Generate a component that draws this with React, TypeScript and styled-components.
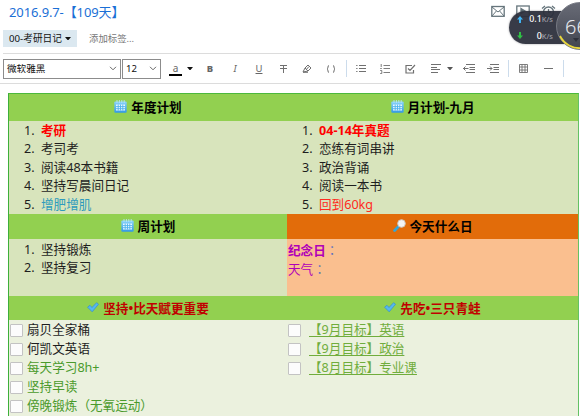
import React from "react";
import styled, { createGlobalStyle } from "styled-components";

const Global = createGlobalStyle`
  * { box-sizing: border-box; }
  html, body { margin: 0; padding: 0; background: #fff; overflow: hidden; }
  body { font-family: "Noto Sans", "Noto Sans CJK SC", sans-serif; font-size: 12.6px; color: #1e1e1e; }
`;

const Page = styled.div`
  position: relative;
  width: 580px;
  height: 416px;
  overflow: hidden;
  background: #fff;
`;

const TitleBar = styled.header`
  height: 27px;
  padding: 0 0 0 9px;
  display: flex;
  justify-content: space-between;
`;

const Title = styled.h1`
  margin: 0;
  font-size: 13px;
  line-height: 25px;
  font-weight: 400;
  color: #1a6fd6;
  white-space: nowrap;
  letter-spacing: -0.12px;
`;

const TitleIcons = styled.div`
  display: flex;
  gap: 11px;
  margin-top: 5px;
  margin-right: -1px;
  svg { display: block; }
`;

const TagRow = styled.div`
  height: 27px;
  margin: 0 0 0 3px;
  padding-top: 3px;
  display: flex;
  align-items: flex-start;
  border-bottom: 1px solid #dcdcdc;
`;

const Notebook = styled.div`
  width: 74px;
  height: 17px;
  padding-left: 6px;
  display: flex;
  align-items: center;
  gap: 3px;
  background: #dbe8f0;
  font-size: 9.7px;
  line-height: 17px;
  color: #111;
  white-space: nowrap;
`;

const TagHint = styled.span`
  margin-left: 12px;
  font-size: 9.4px;
  line-height: 17px;
  color: #777;
  white-space: nowrap;
`;

const Toolbar = styled.div`
  height: 30px;
  padding: 0 0 0 3px;
  display: flex;
  align-items: center;
  border-bottom: 1px solid #dcdcdc;
`;

const Select = styled.div<{ $w: number }>`
  width: ${(p) => p.$w}px;
  height: 20px;
  margin-right: 1px;
  padding: 0 3px;
  display: flex;
  align-items: center;
  justify-content: space-between;
  border: 1px solid #8c8c8c;
  font-size: 9.6px;
  line-height: 16px;
  color: #111;
`;

const Tool = styled.span<{ $w: number; $ml: number }>`
  width: ${(p) => p.$w}px;
  margin-left: ${(p) => p.$ml}px;
  flex: none;
  display: flex;
  justify-content: center;
  svg { display: block; }
`;

const Glyph = styled.span<{ $bold?: boolean; $italic?: boolean; $under?: boolean }>`
  font-family: "Noto Sans", sans-serif;
  font-size: 9.5px;
  line-height: 12px;
  color: #666;
  font-weight: ${(p) => (p.$bold ? 800 : 400)};
  font-style: ${(p) => (p.$italic ? "italic" : "normal")};
  text-decoration: ${(p) => (p.$under ? "underline" : "none")};
`;

const ColorSwatch = styled.span`
  width: 13px;
  height: 13px;
  margin-left: 7px;
  margin-top: 1px;
  display: flex;
  align-items: center;
  justify-content: center;
  border-bottom: 2px solid #000;
  font-size: 10px;
  line-height: 10px;
  color: #666;
`;

const Divider = styled.span<{ $ml: number }>`
  width: 1px;
  height: 17px;
  margin-left: ${(p) => p.$ml}px;
  background: #ccdcec;
`;

const Sheet = styled.main`
  width: 571px;
  height: 340px;
  margin: 9px 0 0 8px;
  display: grid;
  grid-template-columns: 278px 1fr;
  grid-template-rows: 27px 93px 25px 57px 24px 1fr;
  border: 1px solid #3db03a;
  border-top-color: #4cb83c;
  border-right-color: #63c264;
`;

const HeadCell = styled.div<{ $tone?: "orange"; $red?: boolean }>`
  display: flex;
  align-items: center;
  justify-content: center;
  gap: 4px;
  background: ${(p) => (p.$tone === "orange" ? "#e26c0a" : "#92d050")};
  color: ${(p) => (p.$red ? "#c00000" : "#000")};
  font-weight: 700;
  line-height: 19px;
  white-space: nowrap;
  svg { display: block; flex: none; margin-top: ${(p) => (p.$red ? -1 : -3)}px; }
`;

const Cell = styled.div<{ $bg: string; $pad: string }>`
  padding: ${(p) => p.$pad};
  background: ${(p) => p.$bg};
  overflow: hidden;
`;

const Item = styled.div`
  display: grid;
  grid-template-columns: 17px 1fr;
  height: 18.4px;
  line-height: 18.4px;
  white-space: nowrap;
`;

const Text = styled.span<{ $color?: string; $bold?: boolean; $link?: boolean }>`
  color: ${(p) => p.$color ?? "inherit"};
  font-weight: ${(p) => (p.$bold ? 700 : 400)};
  text-decoration: ${(p) => (p.$link ? "underline" : "none")};
  text-underline-offset: 2px;
`;

const Colon = styled.span`
  font-family: "Noto Sans CJK TC", sans-serif;
  color: #5b6fc0;
`;

const CheckRow = styled.div<{ $gap: number }>`
  display: flex;
  align-items: center;
  gap: ${(p) => p.$gap}px;
  height: 18.9px;
  line-height: 18.9px;
  white-space: nowrap;
`;

const Box = styled.span`
  width: 13px;
  height: 13px;
  flex: none;
  margin-top: 1px;
  border: 1px solid #c3c3c3;
  border-radius: 1px;
  background: #fcfcfc;
`;

const MemoLine = styled.div`
  height: 19px;
  line-height: 19px;
  color: #b000b8;
`;

const SpeedWidget = styled.aside`
  position: absolute;
  left: 509px;
  top: 11px;
  width: 90px;
  height: 33px;
  padding: 0 0 0 8px;
  border-radius: 17px;
  background: rgba(44, 47, 60, 0.94);
  box-shadow: 0 0 2px rgba(40, 40, 50, 0.5);
`;

const SpeedRow = styled.div`
  width: 36px;
  height: 16.5px;
  display: grid;
  grid-template-columns: 7px 1fr auto;
  align-items: center;
  font-size: 8.8px;
  font-weight: 500;
  line-height: 16px;
  color: #fff;
  text-align: right;
  white-space: nowrap;
  svg { display: block; }
`;

const Unit = styled.span`
  font-size: 7.5px;
  color: #9a9ca6;
`;

const Dial = styled.div`
  position: absolute;
  left: 556px;
  top: 2px;
  width: 48px;
  height: 48px;
  border-radius: 50%;
  background: linear-gradient(#686b76, #41444f);
  border: 1px solid #777a84;
  color: #e6e8ec;
  font-size: 20px;
  font-weight: 300;
  line-height: 47px;
  padding-left: 8px;
  svg { position: absolute; left: 0; top: 0; }
`;

const Caret = ({ size = 6, color = "#111" }: { size?: number; color?: string }) => (
  <svg width={size} height={size / 2 + 0.5} viewBox="0 0 6 3.5"><path d="M0 0h6L3 3.5z" fill={color} /></svg>
);
const Chevron = () => (
  <svg width="8" height="5" viewBox="0 0 8 5" fill="none" stroke="#666"><path d="M1 .8l3 3 3-3" /></svg>
);
const Calendar = () => (
  <svg width="13" height="13" viewBox="0 0 13 13">
    <defs>
      <linearGradient id="cal" x1="0" y1="0" x2="0" y2="1">
        <stop offset="0" stopColor="#8ed6fa" /><stop offset="1" stopColor="#3299e6" />
      </linearGradient>
    </defs>
    <rect x=".3" y="1.4" width="12.4" height="11.3" rx="1.2" fill="url(#cal)" />
    <path d="M3 0v3M5.4 0v3M7.8 0v3M10.2 0v3" stroke="#b9e4fa" strokeWidth=".9" />
    <rect x="2" y="4.5" width="9" height="6" fill="#e9f8ff" />
    <path d="M4.2 4.5v6M6.5 4.5v6M8.8 4.5v6M2 6.6h9M2 8.7h9" stroke="#4fb2ee" strokeWidth=".9" />
  </svg>
);
const Check = () => (
  <svg width="12" height="11" viewBox="0 0 12 11">
    <path d="M.6 5.2L3 3.3l2 2.2L9.6.7l1.9 1.5L5.2 9.8z" fill="#55b8f0" stroke="#3b93cf" strokeWidth=".8" strokeLinejoin="round" />
  </svg>
);
const Magnifier = () => (
  <svg width="13" height="13" viewBox="0 0 13 13">
    <path d="M1.6 11.4l3.6-3.6" stroke="#35a6d8" strokeWidth="2.8" strokeLinecap="round" />
    <circle cx="8.5" cy="4.5" r="3.8" fill="#f4f4f4" stroke="#cfcac5" />
  </svg>
);
const line = { fill: "none", stroke: "#707070", strokeWidth: 1 };

const ListItems = ({ rows }: { rows: { t: string; c?: string; b?: boolean }[] }) => (
  <>
    {rows.map((r, i) => (
      <Item key={r.t}>
        <span>{i + 1}.</span>
        <Text $color={r.c} $bold={r.b}>{r.t}</Text>
      </Item>
    ))}
  </>
);

const yearly = [
  { t: "考研", c: "#ff0000", b: true },
  { t: "考司考" },
  { t: "阅读48本书籍" },
  { t: "坚持写晨间日记" },
  { t: "增肥增肌", c: "#2e9bbd" },
];
const monthly = [
  { t: "04-14年真题", c: "#ff0000", b: true },
  { t: "恋练有词串讲" },
  { t: "政治背诵" },
  { t: "阅读一本书" },
  { t: "回到60kg", c: "#ff2a20" },
];
const weekly = [{ t: "坚持锻炼" }, { t: "坚持复习" }];
const habits = [
  { t: "扇贝全家桶" },
  { t: "何凯文英语" },
  { t: "每天学习8h+", c: "#4a9a2c" },
  { t: "坚持早读", c: "#4a9a2c" },
  { t: "傍晚锻炼（无氧运动）", c: "#4a9a2c" },
];
const goals = ["【9月目标】英语", "【9月目标】政治", "【8月目标】专业课"];

export default function App() {
  return (
    <Page>
      <Global />
      <TitleBar>
        <Title>2016.9.7-【109天】</Title>
        <TitleIcons>
          <svg width="14" height="13" viewBox="0 0 14 13" fill="none" stroke="#66757c" strokeWidth="1.3">
            <rect x=".8" y="1.5" width="12.4" height="9.8" /><path d="M1 2l6 5 6-5M1 11l4.4-5M13 11L8.6 6" strokeWidth="1" />
          </svg>
          <svg width="14" height="13" viewBox="0 0 14 13" fill="none" stroke="#66757c" strokeWidth="1.3">
            <rect x=".8" y="1" width="12.4" height="10.5" /><path d="M5 3.5L9 6 5 8.5z" fill="#66757c" />
          </svg>
          <svg width="15" height="14" viewBox="0 0 15 14" fill="none" stroke="#66757c" strokeWidth="1.3">
            <circle cx="7.5" cy="7" r="5" /><path d="M7.5 4v3H10M1 3.5L4 1M14 3.5L11 1" />
          </svg>
          <svg width="14" height="14" viewBox="0 0 14 14" fill="none" stroke="#66757c" strokeWidth="1.2">
            <circle cx="7" cy="7" r="5.6" /><path d="M7 6v4M7 3.6v1.2" />
          </svg>
        </TitleIcons>
      </TitleBar>

      <TagRow>
        <Notebook>00-考研日记<Caret /></Notebook>
        <TagHint>添加标签...</TagHint>
      </TagRow>

      <Toolbar>
        <Select $w={118}>微软雅黑<Chevron /></Select>
        <Select $w={39}>12<Chevron /></Select>
        <ColorSwatch>a</ColorSwatch>
        <Tool $w={6} $ml={5}><Caret /></Tool>
        <Tool $w={12} $ml={11}><Glyph $bold>B</Glyph></Tool>
        <Tool $w={12} $ml={13}><Glyph $italic>I</Glyph></Tool>
        <Tool $w={12} $ml={12}><Glyph $under>U</Glyph></Tool>
        <Tool $w={12} $ml={12}>
          <svg width="9" height="9" viewBox="0 0 9 9" {...line}><path d="M1 1.5h7M1 4.5h7M4.5 1.5V9" /></svg>
        </Tool>
        <Tool $w={12} $ml={12}>
          <svg width="10" height="9" viewBox="0 0 10 9" {...line}><path d="M1 8l2-4 3-3 3 3-3 3zM1 8.3h5M3 4l3 3M4.5 5.3L7 2.5" /></svg>
        </Tool>
        <Tool $w={12} $ml={12}>
          <svg width="10" height="8" viewBox="0 0 10 8" {...line}><path d="M3 .5Q2 .5 2 2t-1 2q1 .5 1 2t1 1.5M7 .5Q8 .5 8 2t1 2q-1 .5-1 2t-1 1.5" /></svg>
        </Tool>
        <Divider $ml={9} />
        <Tool $w={10} $ml={9}>
          <svg width="10" height="9" viewBox="0 0 10 9" {...line}><path d="M3 1.5h7M3 4.5h7M3 7.5h7M.2 1.5h1.3M.2 4.5h1.3M.2 7.5h1.3" /></svg>
        </Tool>
        <Tool $w={10} $ml={14}>
          <svg width="10" height="10" viewBox="0 0 10 10" {...line}><path d="M3.5 1.5H10M3.5 4.5H10M3.5 8.5H10M1.2 0v3M.2 4.5h1.6M.2 6.5h1.6v3H.2" strokeWidth=".9" /></svg>
        </Tool>
        <Tool $w={11} $ml={15}>
          <svg width="11" height="10" viewBox="0 0 11 10" {...line} strokeWidth={1.2}><path d="M7 1.5H1v7.5h7.5V6M3 4.5l2 2 5-5.5" /></svg>
        </Tool>
        <Tool $w={10} $ml={15}>
          <svg width="10" height="9" viewBox="0 0 10 9" {...line}><path d="M0 .5h10M0 3.5h6M0 5.5h9M0 8.5h7" /></svg>
        </Tool>
        <Tool $w={6} $ml={6}><Caret color="#555" /></Tool>
        <Tool $w={12} $ml={10}>
          <svg width="12" height="9" viewBox="0 0 12 9" {...line}><path d="M3 .5h9M6.5 3.5H12M6.5 5.5H12M3 8.5h9M0 4.5h5.5M2.5 2.5l-2 2 2 2" /></svg>
        </Tool>
        <Tool $w={12} $ml={12}>
          <svg width="12" height="9" viewBox="0 0 12 9" {...line}><path d="M3 .5h9M6.5 3.5H12M6.5 5.5H12M3 8.5h9M0 4.5h5M3 2.5l2 2-2 2" /></svg>
        </Tool>
        <Divider $ml={9} />
        <Tool $w={9} $ml={10}>
          <svg width="9" height="9" viewBox="0 0 9 9" {...line}><path d="M.5.5h8v8h-8zM3 .5v8M6 .5v8M.5 3h8M.5 6h8" strokeWidth=".9" /></svg>
        </Tool>
        <Tool $w={9} $ml={16}>
          <svg width="9" height="3" viewBox="0 0 9 3" {...line}><path d="M0 1.5h9" /></svg>
        </Tool>
        <Divider $ml={10} />
      </Toolbar>

      <Sheet>
        <HeadCell><Calendar />年度计划</HeadCell>
        <HeadCell><Calendar />月计划-九月</HeadCell>
        <Cell $bg="#d8e4bc" $pad="1px 0 0 15px"><ListItems rows={yearly} /></Cell>
        <Cell $bg="#d8e4bc" $pad="1px 0 0 15px"><ListItems rows={monthly} /></Cell>

        <HeadCell><Calendar />周计划</HeadCell>
        <HeadCell $tone="orange"><Magnifier />今天什么日</HeadCell>
        <Cell $bg="#d8e4bc" $pad="1.6px 0 0 15px"><ListItems rows={weekly} /></Cell>
        <Cell $bg="#fabf8f" $pad="1px 0 0 1px">
          <MemoLine><Text $bold>纪念日</Text><Colon>：</Colon></MemoLine>
          <MemoLine>天气<Colon>：</Colon></MemoLine>
        </Cell>

        <HeadCell $red><Check />坚持•比天赋更重要</HeadCell>
        <HeadCell $red><Check />先吃•三只青蛙</HeadCell>
        <Cell $bg="#ebf1de" $pad="1px 0 0 1px">
          {habits.map((h) => (
            <CheckRow key={h.t} $gap={4}><Box /><Text $color={h.c}>{h.t}</Text></CheckRow>
          ))}
        </Cell>
        <Cell $bg="#ebf1de" $pad="1px 0 0 1px">
          {goals.map((g) => (
            <CheckRow key={g} $gap={8}><Box /><Text $color="#70ad3c" $link>{g}</Text></CheckRow>
          ))}
        </Cell>
      </Sheet>

      <SpeedWidget>
        <SpeedRow>
          <svg width="6" height="7" viewBox="0 0 6 7"><path d="M3 0l3 3.4H4V7H2V3.4H0z" fill="#3fb4f4" /></svg>
          <span>0.1</span><Unit>K/s</Unit>
        </SpeedRow>
        <SpeedRow>
          <svg width="6" height="7" viewBox="0 0 6 7"><path d="M3 7l3-3.4H4V0H2v3.6H0z" fill="#2fc044" /></svg>
          <span>0</span><Unit>K/s</Unit>
        </SpeedRow>
      </SpeedWidget>
      <Dial>
        66
        <svg width="46" height="46" viewBox="0 0 46 46" fill="none">
          <path d="M3 33A22 22 0 0 0 25 45" stroke="#e8d63c" strokeWidth="1.8" />
          <path d="M16 35h6l-3 4z" fill="#2f323c" />
        </svg>
      </Dial>
    </Page>
  );
}
